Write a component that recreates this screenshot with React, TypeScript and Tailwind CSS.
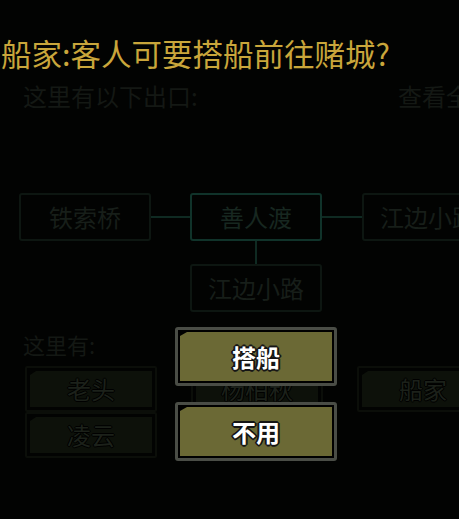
const cjk = { fontFamily: '"Noto Sans CJK SC", "Noto Sans", sans-serif' };

const exits = ["铁索桥", "善人渡", "江边小路"];

function MapBox({ label, active }: { label: string; active?: boolean }) {
  return (
    <div
      className={`flex h-[48px] w-[132px] shrink-0 items-center justify-center rounded-[3px] border-2 text-[24px] ${
        active ? "border-[#10332a] text-[#172720]" : "border-[#0d1611] text-[#171e19]"
      }`}
    >
      {label}
    </div>
  );
}

function NpcButton({ name }: { name: string }) {
  return (
    <div className="h-[46px] w-[132px] rounded-[2px] border-2 border-[#0b0e09] p-[3px]">
      <div className="flex h-full w-full items-center justify-center bg-[#0d110a] text-[24px] text-[#1c211a] [clip-path:polygon(6px_0,100%_0,100%_100%,0_100%,0_4px)] [text-shadow:_-1px_0_#000,1px_0_#000,0_-1px_#000,0_1px_#000]">
        {name}
      </div>
    </div>
  );
}

function ChoiceButton({ label }: { label: string }) {
  return (
    <div className="h-[59px] w-[162px] rounded-[3px] border-[3px] border-[#4a4d46] bg-black p-[2px]">
      <div className="flex h-full w-full items-center justify-center bg-[#6b6935] text-[24px] font-bold text-white [clip-path:polygon(7px_0,100%_0,100%_100%,0_100%,0_4px)] [text-shadow:_-2px_0_#151515,2px_0_#151515,0_-2px_#151515,0_2px_#151515,-1px_-1px_#151515,1px_1px_#151515,-1px_1px_#151515,1px_-1px_#151515]">
        {label}
      </div>
    </div>
  );
}

export default function App() {
  return (
    <div className="relative h-[519px] w-[459px] overflow-hidden bg-[#020302]" style={cjk}>
      <div className="flex flex-col">
        <div className="mt-[38px] whitespace-nowrap pl-[1px] text-[30.5px] leading-[30px] text-[#c9a63b]">
          船家:客人可要搭船前往赌城?
        </div>

        <div className="mt-[16px] flex whitespace-nowrap pl-[23px] text-[24px] leading-[24px] text-[#141814]">
          <span className="w-[375px] shrink-0">这里有以下出口:</span>
          <span className="shrink-0">查看全部</span>
        </div>

        {/* exits map */}
        <div className="mt-[85px] flex items-center pl-[19px]">
          <MapBox label={exits[0]} />
          <div className="h-[2px] w-[39px] shrink-0 bg-[#0f2a22]" />
          <MapBox label={exits[1]} active />
          <div className="h-[2px] w-[40px] shrink-0 bg-[#0f2a22]" />
          <MapBox label={exits[2]} />
        </div>
        <div className="ml-[255px] h-[23px] w-[2px] bg-[#0f2a22]" />
        <div className="ml-[190px]">
          <MapBox label="江边小路" />
        </div>

        <div className="mt-[21px] pl-[23px] text-[22px] leading-[22px] text-[#141814]">这里有:</div>

        <div className="mt-[11px] grid grid-cols-[132px_132px_132px] gap-x-[34px] pl-[25px]">
          <NpcButton name="老头" />
          <NpcButton name="杨柏秋" />
          <NpcButton name="船家" />
          <NpcButton name="凌云" />
        </div>
      </div>

      {/* boat prompt */}
      <div className="absolute left-[175px] top-[327px] flex flex-col gap-[16px]">
        <ChoiceButton label="搭船" />
        <ChoiceButton label="不用" />
      </div>
    </div>
  );
}
